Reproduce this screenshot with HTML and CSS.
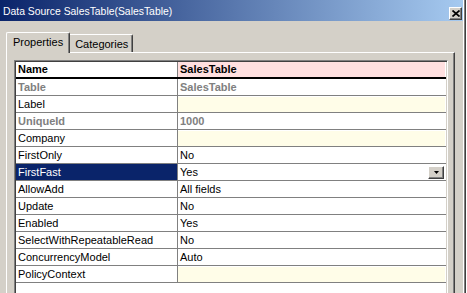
FILE: index.html
```html
<!DOCTYPE html>
<html lang="en">
<head>
    <meta charset="UTF-8">
    <title>Data Source SalesTable(SalesTable)</title>
    <link rel="stylesheet" href="styles.css">
</head>
<body>
    <div class="window">
        <div class="titlebar">
            <span class="caption">Data Source SalesTable(SalesTable)</span>
            <span class="close-btn">
                <svg width="8" height="7" viewBox="0 0 8 7">
                    <path d="M0.5 0.5 L7.5 6.5 M7.5 0.5 L0.5 6.5" stroke="#000" stroke-width="1.7" fill="none"/>
                </svg>
            </span>
        </div>

        <div class="tabs">
            <div class="tab tab-active">Properties</div>
            <div class="tab">Categories</div>
        </div>

        <div class="panel">
            <div class="grid">
                <div class="row row-head">
                    <div class="cell-name">Name</div>
                    <div class="cell-value tint-pink">SalesTable</div>
                </div>
                <div class="row muted">
                    <div class="cell-name">Table</div>
                    <div class="cell-value">SalesTable</div>
                </div>
                <div class="row">
                    <div class="cell-name">Label</div>
                    <div class="cell-value tint-yellow"></div>
                </div>
                <div class="row muted">
                    <div class="cell-name">UniqueId</div>
                    <div class="cell-value">1000</div>
                </div>
                <div class="row">
                    <div class="cell-name">Company</div>
                    <div class="cell-value tint-yellow"></div>
                </div>
                <div class="row">
                    <div class="cell-name">FirstOnly</div>
                    <div class="cell-value">No</div>
                </div>
                <div class="row row-selected">
                    <div class="cell-name">FirstFast</div>
                    <div class="cell-value">
                        <span>Yes</span>
                        <span class="combo-btn">
                            <svg width="5" height="3" viewBox="0 0 5 3">
                                <polygon points="0,0 5,0 2.5,3" fill="#000"/>
                            </svg>
                        </span>
                    </div>
                </div>
                <div class="row">
                    <div class="cell-name">AllowAdd</div>
                    <div class="cell-value">All fields</div>
                </div>
                <div class="row">
                    <div class="cell-name">Update</div>
                    <div class="cell-value">No</div>
                </div>
                <div class="row">
                    <div class="cell-name">Enabled</div>
                    <div class="cell-value">Yes</div>
                </div>
                <div class="row">
                    <div class="cell-name">SelectWithRepeatableRead</div>
                    <div class="cell-value">No</div>
                </div>
                <div class="row">
                    <div class="cell-name">ConcurrencyModel</div>
                    <div class="cell-value">Auto</div>
                </div>
                <div class="row">
                    <div class="cell-name">PolicyContext</div>
                    <div class="cell-value tint-yellow"></div>
                </div>
            </div>
        </div>
    </div>
</body>
</html>
```

FILE: styles.css
```css
body {
    margin: 0;
    background-color: #fff;
    font-family: 'Liberation Sans', Arial, sans-serif;
    font-size: 11px;
    color: #000;
}

.window {
    width: 463px;
    height: 293px;
    background-color: #d4d0c8;
    border-right: 1px solid #fff;
    box-shadow: 1px 0 #808080, 2px 0 #404040;
    display: flex;
    flex-direction: column;
    overflow: hidden;
}

/* caption bar */
.titlebar {
    height: 21px;
    flex-shrink: 0;
    display: flex;
    align-items: center;
    padding: 0 1px 0 3px;
    background: linear-gradient(to right, #0a246a, #a6caf0);
    color: #fff;
}

.caption {
    font-size: 10.4px;
    padding-top: 2px;
}

.close-btn {
    margin-left: auto;
    align-self: flex-start;
    margin-top: 7px;
    width: 13px;
    height: 13px;
    box-sizing: border-box;
    background-color: #d4d0c8;
    border-top: 1px solid #fff;
    border-left: 1px solid #fff;
    border-right: 1px solid #404040;
    border-bottom: 1px solid #404040;
    box-shadow: inset -1px -1px #808080;
    display: flex;
    align-items: center;
    justify-content: center;
}

/* tabs */
.tabs {
    display: flex;
    align-items: flex-end;
    padding: 11px 0 0 6px;
    flex-shrink: 0;
}

.tab {
    line-height: 14px;
    padding: 2px 4px 1px 5px;
    border-top: 1px solid #fff;
    border-right: 1px solid #404040;
    box-shadow: inset -1px 0 #808080;
    border-radius: 0 2px 0 0;
    background-color: #d4d0c8;
}

.tab-active {
    position: relative;
    z-index: 1;
    padding: 2px 6px 4px 6px;
    margin-bottom: -1px;
    border-left: 1px solid #fff;
    border-radius: 2px 2px 0 0;
}

/* tab page */
.panel {
    flex: 1;
    display: flex;
    flex-direction: column;
    margin: 0 8px 0 6px;
    padding: 7px 6px 0 7px;
    border-top: 1px solid #fff;
    border-left: 1px solid #fff;
    border-right: 1px solid #404040;
    box-shadow: inset -1px 0 #808080;
}

.grid {
    flex: 1;
    padding: 1px;
    background-color: #fff;
    border-top: 1px solid #808080;
    border-left: 1px solid #808080;
    border-right: 1px solid #fff;
    box-shadow: inset 1px 1px #404040, inset -1px 0 #d4d0c8;
}

.row {
    display: grid;
    grid-template-columns: 162px 1fr;
    line-height: 16px;
    border-bottom: 1px solid #808080;
}

.row-head {
    font-weight: bold;
    line-height: 15px;
    border-bottom: 2px solid #000;
}

.cell-name {
    padding-left: 2px;
    border-right: 1px solid #808080;
    white-space: nowrap;
}

.cell-value {
    padding-left: 2px;
    display: flex;
    align-items: center;
    justify-content: space-between;
}

.muted {
    color: #808080;
    font-weight: bold;
}

.tint-pink {
    background-color: #ffe0e0;
    box-shadow: inset -1px 0 #fff;
}

.tint-yellow {
    background-color: #fffde8;
    box-shadow: inset 0 1px #fff, inset -1px 0 #fff;
}

.row-selected .cell-name {
    background-color: #0a246a;
    color: #fff;
}

.combo-btn {
    width: 16px;
    height: 13px;
    margin-right: 2px;
    box-sizing: border-box;
    background-color: #d4d0c8;
    border-top: 1px solid #fff;
    border-left: 1px solid #fff;
    border-right: 1px solid #404040;
    border-bottom: 1px solid #404040;
    box-shadow: inset -1px -1px #808080;
    display: flex;
    align-items: center;
    justify-content: center;
}
```
